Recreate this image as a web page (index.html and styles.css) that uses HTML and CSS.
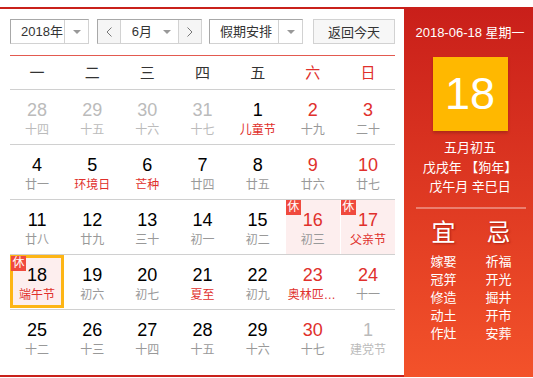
FILE: index.html
```html
<!DOCTYPE html>
<html lang="zh-CN">
<head>
    <meta charset="UTF-8">
    <meta name="viewport" content="width=device-width, initial-scale=1.0">
    <title>万年历</title>
    <link rel="stylesheet" href="styles.css">
</head>
<body>
    <div class="calendar">
        <div class="main">
            <div class="toolbar">
                <div class="select year">
                    <span class="label">2018年</span>
                    <span class="drop"><i class="caret"></i></span>
                </div>
                <div class="month-nav">
                    <span class="nav-btn">
                        <svg width="6" height="10" viewBox="0 0 6 10"><polyline points="5.5,0.5 1,5 5.5,9.5" fill="none" stroke="#777" stroke-width="1"/></svg>
                    </span>
                    <div class="month">
                        <span class="label">6月</span>
                        <i class="caret"></i>
                    </div>
                    <span class="nav-btn">
                        <svg width="6" height="10" viewBox="0 0 6 10"><polyline points="0.5,0.5 5,5 0.5,9.5" fill="none" stroke="#777" stroke-width="1"/></svg>
                    </span>
                </div>
                <div class="select holiday">
                    <span class="label">假期安排</span>
                    <span class="drop"><i class="caret"></i></span>
                </div>
                <button class="today-btn">返回今天</button>
            </div>

            <div class="weekdays">
                <span>一</span><span>二</span><span>三</span><span>四</span><span>五</span>
                <span class="red">六</span><span class="red">日</span>
            </div>

            <div class="week">
                <div class="day other"><div class="num">28</div><div class="lunar">十四</div></div>
                <div class="day other"><div class="num">29</div><div class="lunar">十五</div></div>
                <div class="day other"><div class="num">30</div><div class="lunar">十六</div></div>
                <div class="day other"><div class="num">31</div><div class="lunar">十七</div></div>
                <div class="day"><div class="num">1</div><div class="lunar fest">儿童节</div></div>
                <div class="day weekend"><div class="num">2</div><div class="lunar">十九</div></div>
                <div class="day weekend"><div class="num">3</div><div class="lunar">二十</div></div>
            </div>
            <div class="week">
                <div class="day"><div class="num">4</div><div class="lunar">廿一</div></div>
                <div class="day"><div class="num">5</div><div class="lunar fest">环境日</div></div>
                <div class="day"><div class="num">6</div><div class="lunar fest">芒种</div></div>
                <div class="day"><div class="num">7</div><div class="lunar">廿四</div></div>
                <div class="day"><div class="num">8</div><div class="lunar">廿五</div></div>
                <div class="day weekend"><div class="num">9</div><div class="lunar">廿六</div></div>
                <div class="day weekend"><div class="num">10</div><div class="lunar">廿七</div></div>
            </div>
            <div class="week">
                <div class="day"><div class="num">11</div><div class="lunar">廿八</div></div>
                <div class="day"><div class="num">12</div><div class="lunar">廿九</div></div>
                <div class="day"><div class="num">13</div><div class="lunar">三十</div></div>
                <div class="day"><div class="num">14</div><div class="lunar">初一</div></div>
                <div class="day"><div class="num">15</div><div class="lunar">初二</div></div>
                <div class="day weekend rest"><span class="tag">休</span><div class="num">16</div><div class="lunar">初三</div></div>
                <div class="day weekend rest"><span class="tag">休</span><div class="num">17</div><div class="lunar fest">父亲节</div></div>
            </div>
            <div class="week">
                <div class="day rest selected"><span class="tag">休</span><div class="num">18</div><div class="lunar fest">端午节</div></div>
                <div class="day"><div class="num">19</div><div class="lunar">初六</div></div>
                <div class="day"><div class="num">20</div><div class="lunar">初七</div></div>
                <div class="day"><div class="num">21</div><div class="lunar fest">夏至</div></div>
                <div class="day"><div class="num">22</div><div class="lunar">初九</div></div>
                <div class="day weekend"><div class="num">23</div><div class="lunar fest">奥林匹克日</div></div>
                <div class="day weekend"><div class="num">24</div><div class="lunar">十一</div></div>
            </div>
            <div class="week">
                <div class="day"><div class="num">25</div><div class="lunar">十二</div></div>
                <div class="day"><div class="num">26</div><div class="lunar">十三</div></div>
                <div class="day"><div class="num">27</div><div class="lunar">十四</div></div>
                <div class="day"><div class="num">28</div><div class="lunar">十五</div></div>
                <div class="day"><div class="num">29</div><div class="lunar">十六</div></div>
                <div class="day weekend"><div class="num">30</div><div class="lunar">十七</div></div>
                <div class="day other"><div class="num">1</div><div class="lunar">建党节</div></div>
            </div>
        </div>

        <div class="side">
            <div class="side-date">2018-06-18 星期一</div>
            <div class="big-day">18</div>
            <div class="lunar-info">
                <div>五月初五</div>
                <div>戊戌年 【狗年】</div>
                <div>戊午月 辛巳日</div>
            </div>
            <div class="divider"></div>
            <div class="yiji">
                <div class="col">
                    <div class="head">宜</div>
                    <div>嫁娶</div><div>冠笄</div><div>修造</div><div>动土</div><div>作灶</div>
                </div>
                <div class="col">
                    <div class="head">忌</div>
                    <div>祈福</div><div>开光</div><div>掘井</div><div>开市</div><div>安葬</div>
                </div>
            </div>
        </div>
    </div>
</body>
</html>
```

FILE: styles.css
```css
* {
    box-sizing: border-box;
    margin: 0;
    padding: 0;
}

body {
    font-family: "Liberation Sans", "Noto Sans CJK SC", sans-serif;
    background: #fff;
    color: #333;
}

.calendar {
    display: flex;
    margin-top: 7px;
    height: 370px;
    border-top: 2px solid #c9211b;
    border-bottom: 2px solid #c9211b;
}

.main {
    width: 404px;
    padding: 10px 9px 0 10px;
}

/* toolbar */
.toolbar {
    display: flex;
    height: 25px;
}

.select,
.month-nav {
    display: flex;
    border: 1px solid;
    border-color: #a8a8a8 #d2d2d2 #d2d2d2 #a8a8a8;
    background: #fff;
}

.label {
    font-size: 13px;
    line-height: 23px;
    color: #333;
}

.select .label {
    flex: 1;
    padding-left: 10px;
}

.drop {
    width: 24px;
    border-left: 1px solid #d2d2d2;
    display: flex;
    align-items: center;
    justify-content: center;
}

.caret {
    display: block;
    width: 0;
    height: 0;
    border-top: 4px solid #999;
    border-left: 4px solid transparent;
    border-right: 4px solid transparent;
}

.year {
    width: 79px;
}

.month-nav {
    width: 105px;
    margin-left: 8px;
}

.nav-btn {
    width: 22px;
    background: #f5f5f5;
    display: flex;
    align-items: center;
    justify-content: center;
}

.month {
    width: 60px;
    display: flex;
    align-items: center;
    border-left: 1px solid #d2d2d2;
    border-right: 1px solid #d2d2d2;
    padding: 0 7px 0 11px;
}

.month .label {
    flex: 1;
}

.holiday {
    width: 94px;
    margin-left: 7px;
}

.today-btn {
    width: 82px;
    margin-left: 10px;
    border: 1px solid #d2d2d2;
    background: #f7f7f7;
    font-family: inherit;
    font-size: 13px;
    color: #333;
}

/* grid */
.weekdays {
    display: grid;
    grid-template-columns: repeat(7, 1fr);
    column-gap: 1px;
    margin-top: 11px;
    height: 35px;
    border-top: 1px solid #e35a50;
    border-bottom: 1px solid #d0d0d0;
    text-align: center;
    font-size: 15px;
    line-height: 33px;
    color: #333;
}

.red {
    color: #e0302c;
}

.week {
    display: grid;
    grid-template-columns: repeat(7, 1fr);
    column-gap: 1px;
    height: 55px;
    border-bottom: 1px solid #d0d0d0;
}

.week:last-child {
    border-bottom: none;
    height: 54px;
}

.day {
    position: relative;
    padding-top: 9px;
    text-align: center;
    min-width: 0;
}

.num {
    font-size: 18px;
    line-height: 22px;
    color: #000;
}

.lunar {
    font-size: 12px;
    line-height: 18px;
    color: #999;
    padding: 0 2px;
    white-space: nowrap;
    overflow: hidden;
    text-overflow: ellipsis;
}

.weekend .num,
.lunar.fest {
    color: #e0302c;
}

.other .num,
.other .lunar {
    color: #bbb;
}

.rest {
    background: #fdeeee;
}

.tag {
    position: absolute;
    top: 0;
    left: 0;
    width: 15px;
    height: 15px;
    background: #f04a3e;
    color: #fff;
    font-size: 12px;
    line-height: 15px;
    text-align: center;
}

.selected {
    border: 3px solid #fdb515;
    padding-top: 6px;
    margin-bottom: 1px;
}

.selected .tag {
    top: -2px;
    left: -2px;
}

/* side panel */
.side {
    width: 129px;
    margin: -2px 0;
    padding: 17px 4px 0 7px;
    background: linear-gradient(to bottom, #c91f1a, #f3522a);
    color: #fff;
    text-align: center;
}

.side-date {
    font-size: 13px;
    line-height: 18px;
}

.big-day {
    width: 75px;
    height: 74px;
    margin: 15px auto 0;
    background: #ffb800;
    box-shadow: 0 2px 3px rgba(0, 0, 0, 0.2);
    font-size: 45px;
    line-height: 74px;
}

.lunar-info {
    margin-top: 7px;
    font-size: 13px;
    line-height: 19.5px;
}

.divider {
    height: 2px;
    margin: 10px 3px 0 5px;
    background: rgba(255, 255, 255, 0.35);
}

.yiji {
    display: grid;
    grid-template-columns: 55px 55px;
    margin: 9px 0 0 5px;
    font-size: 13px;
    line-height: 18px;
}

.yiji .head {
    font-size: 24px;
    line-height: 30px;
    margin-bottom: 5px;
    text-shadow: 1px 1px 2px rgba(120, 0, 0, 0.5);
}
```
